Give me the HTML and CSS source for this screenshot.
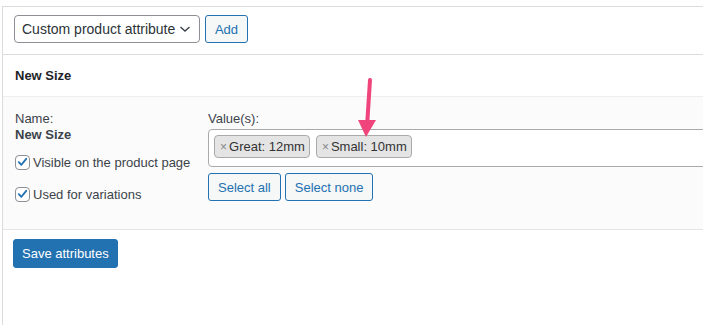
FILE: index.html
```html
<!DOCTYPE html>
<html>
<head>
<meta charset="utf-8">
<link rel="stylesheet" href="styles.css">
</head>
<body>
<div class="wrap">
  <div class="toolbar">
    <div class="select">
      <span>Custom product attribute</span>
      <svg class="chev" width="12" height="8" viewBox="0 0 12 8"><path d="M1.5 2 L6 6 L10.5 2" fill="none" stroke="#3c434a" stroke-width="1.4"/></svg>
    </div>
    <button class="btn">Add</button>
  </div>
  <div class="attr">
    <div class="attr-head">New Size</div>
    <div class="attr-body">
      <div class="col-left">
        <div class="lbl">Name:</div>
        <div class="name">New Size</div>
        <label class="check"><span class="box"><svg width="14" height="14" viewBox="0 0 14 14"><path d="M3 7.2 L5.8 10 L11 3.6" fill="none" stroke="#2271b1" stroke-width="2" stroke-linecap="round" stroke-linejoin="round"/></svg></span>Visible on the product page</label>
        <label class="check"><span class="box"><svg width="14" height="14" viewBox="0 0 14 14"><path d="M3 7.2 L5.8 10 L11 3.6" fill="none" stroke="#2271b1" stroke-width="2" stroke-linecap="round" stroke-linejoin="round"/></svg></span>Used for variations</label>
      </div>
      <div class="col-right">
        <div class="lbl">Value(s):</div>
        <div class="values">
          <span class="tag"><span class="x">×</span>Great: 12mm</span>
          <span class="tag"><span class="x">×</span>Small: 10mm</span>
        </div>
        <div class="btns">
          <button class="btn">Select all</button>
          <button class="btn">Select none</button>
        </div>
      </div>
    </div>
  </div>
  <div class="footer">
    <button class="btn primary">Save attributes</button>
  </div>
</div>
<svg class="arrow" width="30" height="64" viewBox="0 0 30 64">
  <path d="M16 2 L13.3 44" stroke="#f0457c" stroke-width="4" stroke-linecap="round" fill="none"/>
  <path d="M4 42 L22 42 L12 59 Z" fill="#f0457c"/>
</svg>
</body>
</html>
```
FILE: styles.css
```css
html, body {
  margin: 0;
  padding: 0;
  background: #fff;
  overflow: hidden;
}
body {
  font-family: "Liberation Sans", Arial, sans-serif;
  font-size: 13px;
  color: #3c434a;
  position: relative;
  width: 703px;
  height: 325px;
}
.wrap {
  margin: 6px 0 0 2px;
  border-top: 1px solid #dcdcde;
  border-left: 1px solid #dcdcde;
  height: 330px;
}
.toolbar {
  display: flex;
  align-items: center;
  gap: 5px;
  padding: 8px 0 11px 11px;
}
.select {
  box-sizing: border-box;
  width: 186px;
  height: 28px;
  border: 1px solid #8c8f94;
  border-radius: 4px;
  display: flex;
  align-items: center;
  justify-content: space-between;
  padding: 0 8px 0 7px;
  font-size: 14px;
  color: #2c3338;
}
.btn {
  font-family: inherit;
  font-size: 13px;
  box-sizing: border-box;
  height: 28px;
  padding: 0 9px;
  border: 1px solid #2271b1;
  border-radius: 3px;
  background: #f6f7f7;
  color: #2271b1;
}
.toolbar .btn {
  width: 43px;
  padding: 0;
}
.attr {
  border-top: 1px solid #dcdcde;
  border-bottom: 1px solid #e5e5e5;
}
.attr-head {
  height: 41px;
  display: flex;
  align-items: center;
  padding-left: 12px;
  font-weight: bold;
  color: #1d2327;
  border-bottom: 1px solid #eeeeee;
}
.attr-body {
  background: #fbfbfb;
  height: 132px;
  display: grid;
  grid-template-columns: 193px 1fr;
  padding: 14px 0 0 12px;
  box-sizing: border-box;
}
.lbl {
  line-height: 16px;
  color: #3c434a;
}
.name {
  font-weight: bold;
  line-height: 16px;
  color: #3c434a;
}
.check {
  display: flex;
  align-items: center;
  gap: 3px;
  height: 16px;
  margin-top: 11px;
}
.check + .check {
  margin-top: 16px;
}
.box {
  box-sizing: border-box;
  width: 15px;
  height: 15px;
  border: 1px solid #8c8f94;
  border-radius: 4px;
  background: #fff;
  display: flex;
  align-items: center;
  justify-content: center;
}
.values {
  box-sizing: border-box;
  margin-top: 2px;
  margin-right: -20px;
  height: 38px;
  border: 1px solid #aaaaaa;
  border-radius: 4px;
  background: #fff;
  display: flex;
  align-items: flex-start;
  gap: 6px;
  padding: 5px 0 0 5px;
}
.tag {
  box-sizing: border-box;
  height: 23px;
  display: flex;
  align-items: center;
  padding: 0 4px 0 5px;
  background: #e4e4e4;
  border: 1px solid #aaaaaa;
  border-radius: 4px;
  color: #333;
}
.x {
  color: #888;
  margin-right: 2px;
  font-size: 12px;
}
.btns {
  display: flex;
  gap: 4px;
  margin-top: 6px;
}
.footer {
  padding: 9px 0 0 10px;
}
.primary {
  background: #2271b1;
  color: #fff;
  padding: 0 8px;
  height: 29px;
  font-weight: 500;
}
.arrow {
  position: absolute;
  left: 354px;
  top: 78px;
}
```
